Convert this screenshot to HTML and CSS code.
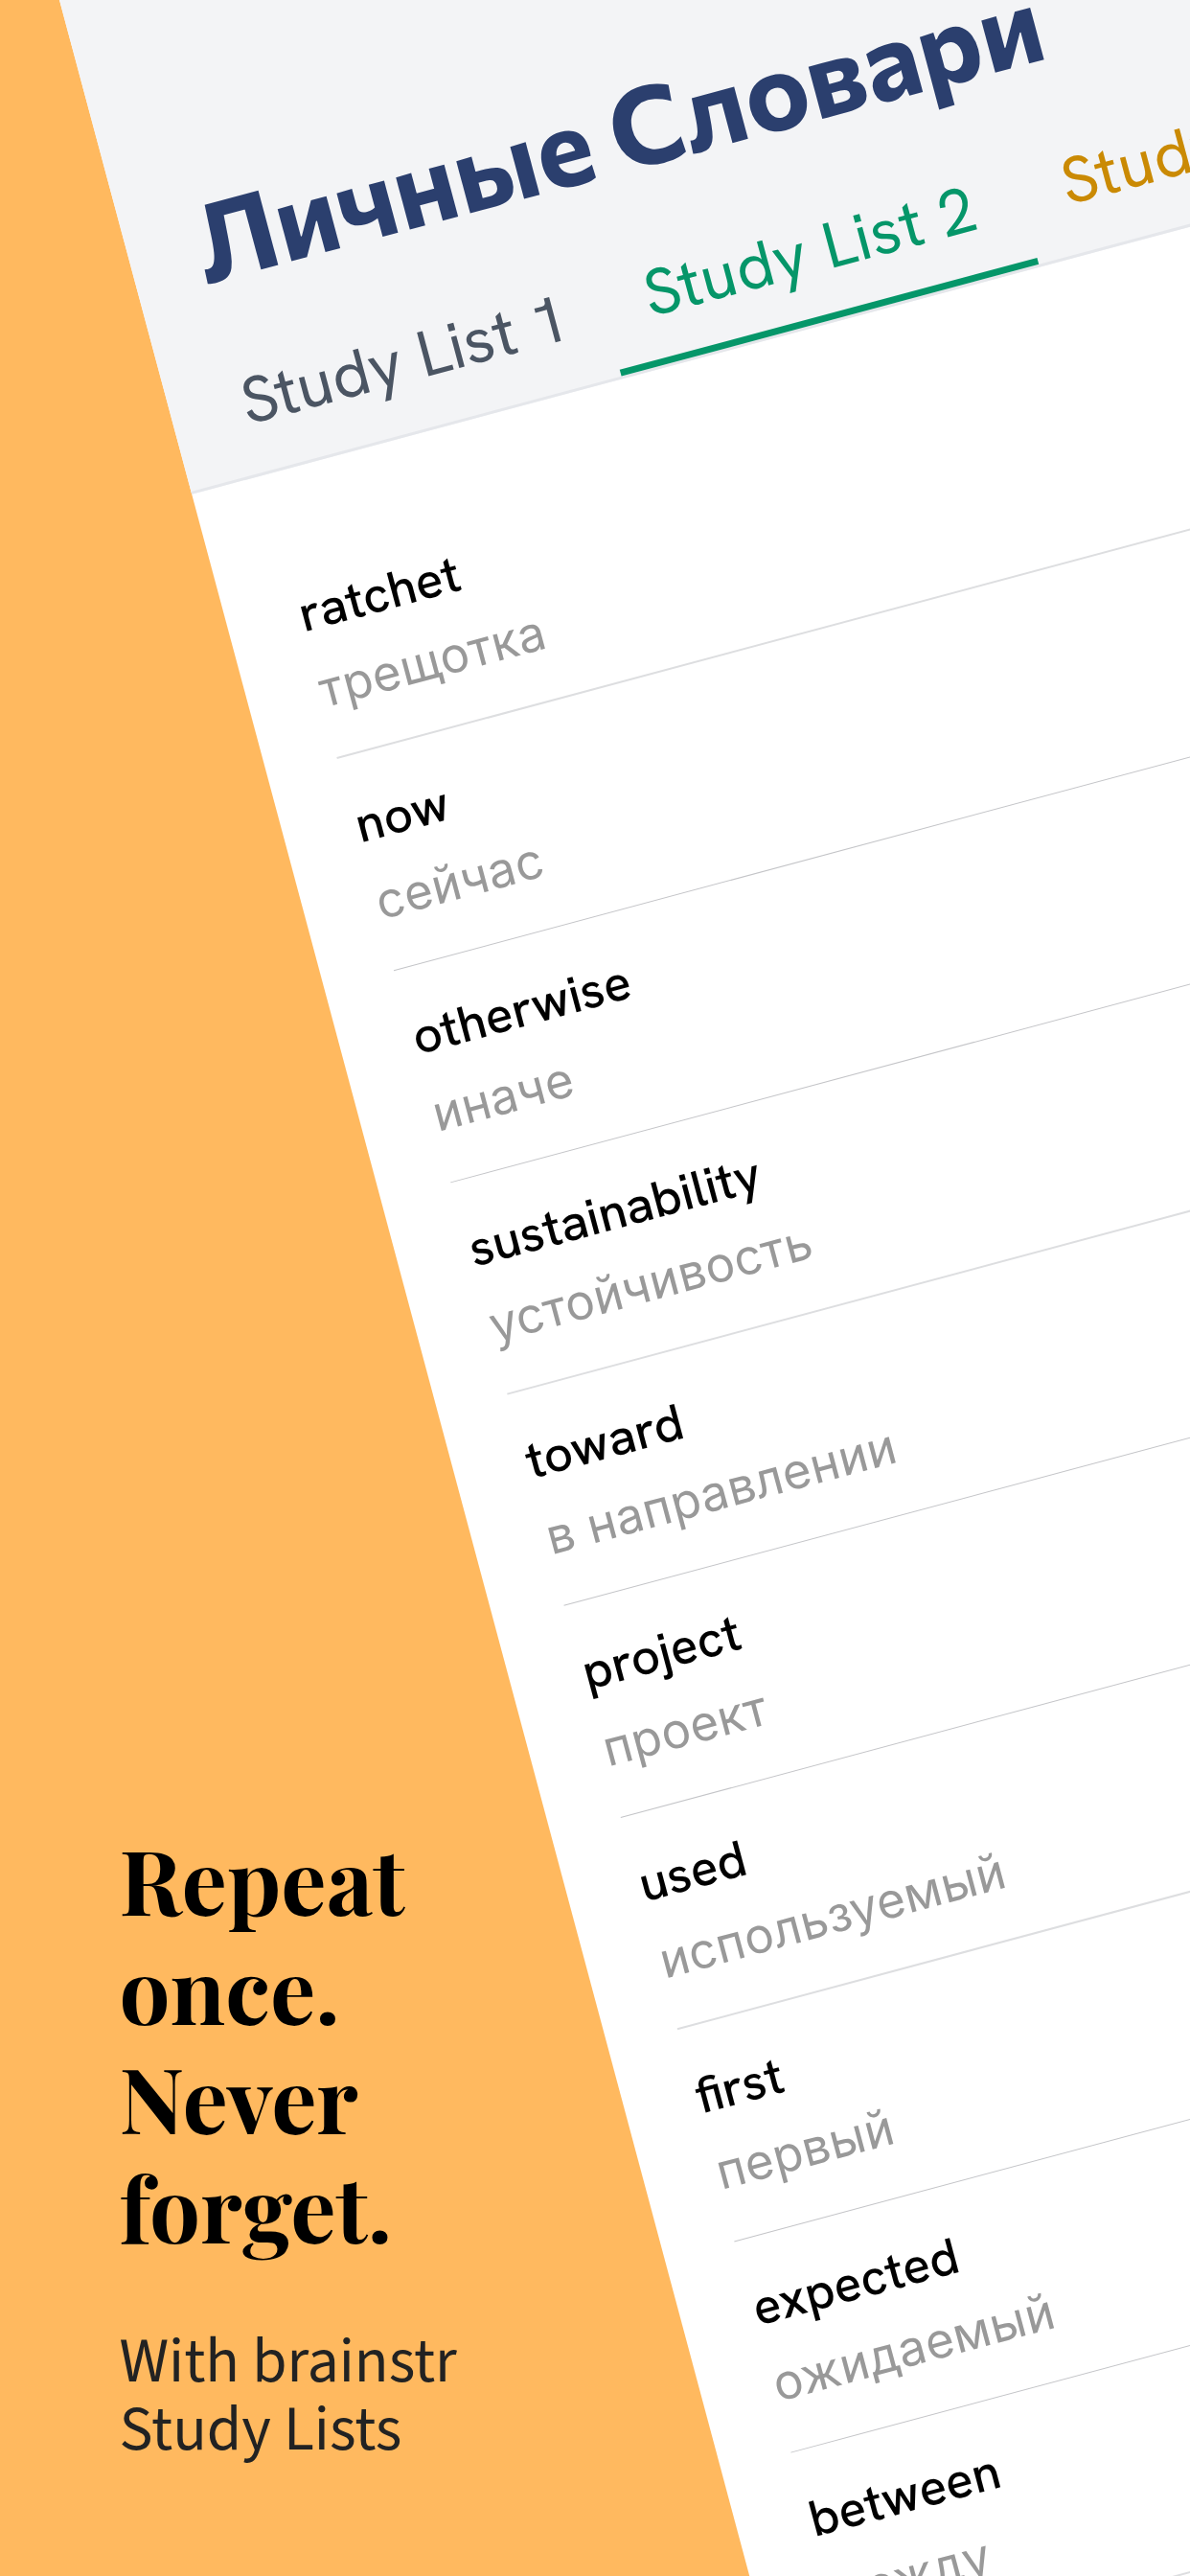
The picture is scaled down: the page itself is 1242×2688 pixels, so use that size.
FILE: index.html
```html
<!DOCTYPE html>
<html lang="en">
<head>
<meta charset="utf-8">
<title>brainstr Study Lists</title>
<link rel="stylesheet" href="styles.css">
</head>
<body>
<main class="stage">
  <section class="panel" lang="ru">
    <header class="panel-header">
      <h2 class="panel-title">Личные Словари</h2>
      <nav class="tabs" lang="en">
        <a class="tab">Study List 1</a>
        <a class="tab tab-active">Study List 2</a>
        <a class="tab tab-amber">Study List 3</a>
      </nav>
    </header>
    <ul class="words">
      <li class="row"><span class="word">ratchet</span><span class="meaning">трещотка</span></li>
      <li class="row"><span class="word">now</span><span class="meaning">сейчас</span></li>
      <li class="row"><span class="word">otherwise</span><span class="meaning">иначе</span></li>
      <li class="row"><span class="word">sustainability</span><span class="meaning">устойчивость</span></li>
      <li class="row"><span class="word">toward</span><span class="meaning">в направлении</span></li>
      <li class="row"><span class="word">project</span><span class="meaning">проект</span></li>
      <li class="row"><span class="word">used</span><span class="meaning">используемый</span></li>
      <li class="row"><span class="word">first</span><span class="meaning">первый</span></li>
      <li class="row"><span class="word">expected</span><span class="meaning">ожидаемый</span></li>
      <li class="row"><span class="word">between</span><span class="meaning">между</span></li>
    </ul>
  </section>
  <section class="caption">
    <h1 class="headline">Repeat<br>once.<br>Never<br>forget.</h1>
    <p class="subline">With brainstr<br>Study Lists</p>
  </section>
</main>
</body>
</html>
```
FILE: styles.css
```css
* {
  box-sizing: border-box;
}

body {
  margin: 0;
  background: #ffb95f;
  font-family: Inter, "Liberation Sans", sans-serif;
}

.stage {
  display: grid;
  grid-template-columns: 1242px;
  grid-template-rows: 2688px;
  width: 1242px;
  height: 2688px;
  overflow: hidden;
}

/* Tilted word-list screen */
.panel {
  grid-area: 1 / 1;
  width: 1200px;
  height: 2960px;
  margin-left: 61.5px;
  background: #fff;
  transform: rotate(-15deg);
  transform-origin: 0 0;
}

.panel-header {
  display: flex;
  flex-direction: column;
  justify-content: flex-end;
  gap: 6.5px;
  height: 534px;
  background: #f3f4f6;
  border-bottom: 3px solid #e5e7eb;
}

.panel-title {
  margin: 0;
  padding-left: 71.5px;
  font-family: Commissioner, Inter, sans-serif;
  font-size: 112.7px;
  font-weight: 700;
  line-height: 140px;
  color: #2b3f6e;
  white-space: nowrap;
}

.tabs {
  display: flex;
  padding-left: 30px;
  height: 175px;
}

.tab {
  flex: none;
  padding: 60px 39px 28px 45px;
  border-bottom: 7px solid transparent;
  font-family: "Hanken Grotesk", Inter, sans-serif;
  font-size: 67.7px;
  line-height: 80px;
  letter-spacing: 0.2px;
  color: #4b5563;
  white-space: nowrap;
}

.tab-active {
  padding-right: 49px;
  letter-spacing: 0.7px;
  color: #059669;
  border-bottom-color: #059669;
}

.tab-amber {
  color: #ca8a04;
  letter-spacing: 0.7px;
}

.words {
  margin: 0;
  padding: 77.5px 0 0 75px;
  list-style: none;
}

.row {
  display: flex;
  flex-direction: column;
  gap: 7.5px;
  height: 228.75px;
  padding: 38px 0 0 1px;
  border-bottom: 1px solid #c4c5c8;
}

.row:nth-child(3n + 1) {
  border-bottom: 2px solid #dddee0;
}

.word {
  font-family: "Hanken Grotesk", Inter, sans-serif;
  font-size: 53px;
  font-weight: 500;
  line-height: 70px;
  color: #000;
}

.meaning {
  font-size: 51px;
  line-height: 80px;
  letter-spacing: 0.45px;
  color: #999;
}

/* Marketing copy */
.caption {
  grid-area: 1 / 1;
  align-self: end;
  z-index: 1;
  padding: 0 0 116.4px 124.5px;
}

.headline {
  margin: 0 0 69.3px;
  font-family: "Playfair Display", "Liberation Serif", serif;
  font-size: 94px;
  font-weight: 700;
  line-height: 114.3px;
  color: #000;
}

.subline {
  margin: 0;
  font-family: "Source Sans 3", "Noto Sans CJK JP", sans-serif;
  font-size: 65.6px;
  line-height: 71.3px;
  color: #222;
}
```
